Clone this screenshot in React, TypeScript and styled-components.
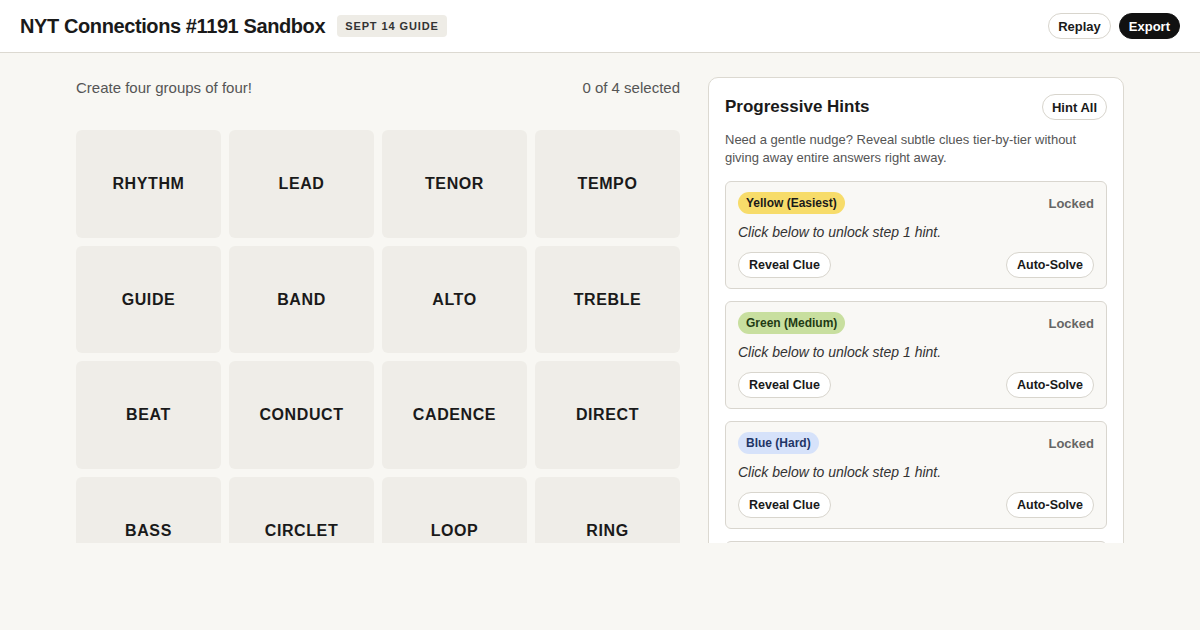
import styled, { createGlobalStyle } from "styled-components";

const GlobalStyle = createGlobalStyle`
  html, body {
    margin: 0;
    padding: 0;
    background: #f8f7f3;
    font-family: "Liberation Sans", Arial, sans-serif;
    color: #1a1a1a;
  }
  * { box-sizing: border-box; }
`;

const TopBar = styled.header`
  height: 53px;
  background: #fff;
  border-bottom: 1px solid #dcd9d1;
  display: flex;
  align-items: center;
  justify-content: space-between;
  padding: 0 20px;
`;

const TitleGroup = styled.div`
  display: flex;
  align-items: center;
  gap: 12px;
`;

const Title = styled.h1`
  margin: 0;
  font-size: 20px;
  font-weight: 700;
  letter-spacing: -0.4px;
`;

const DateBadge = styled.span`
  background: #eeece6;
  border-radius: 4px;
  padding: 5px 8px;
  font-size: 11px;
  font-weight: 700;
  letter-spacing: 0.9px;
  color: #333;
`;

const Actions = styled.div`
  display: flex;
  gap: 8px;
`;

const Pill = styled.button<{ $dark?: boolean }>`
  height: 26px;
  padding: 0 9px;
  border-radius: 13px;
  border: 1px solid ${(p) => (p.$dark ? "#111" : "#d8d5cd")};
  background: ${(p) => (p.$dark ? "#111" : "#fff")};
  color: ${(p) => (p.$dark ? "#fff" : "#1a1a1a")};
  font-family: inherit;
  font-size: 13px;
  font-weight: 700;
  cursor: pointer;
`;

const Main = styled.main`
  height: 490px;
  overflow: hidden;
  padding: 24px 76px 0;
  display: flex;
  gap: 28px;
  align-items: flex-start;
`;

const Board = styled.section`
  width: 604px;
  flex-shrink: 0;
`;

const BoardHead = styled.div`
  display: flex;
  justify-content: space-between;
  align-items: center;
  height: 21px;
  margin-bottom: 32px;
  font-size: 15px;
  color: #555;
`;

const Grid = styled.div`
  display: grid;
  grid-template-columns: repeat(4, 1fr);
  grid-auto-rows: 107.5px;
  gap: 8px;
`;

const Tile = styled.button`
  border: none;
  border-radius: 6px;
  background: #efede8;
  font-family: inherit;
  font-size: 16px;
  font-weight: 700;
  letter-spacing: 0.6px;
  color: #1a1a1a;
  padding-top: 2px;
  cursor: pointer;
`;

const Panel = styled.aside`
  width: 416px;
  flex-shrink: 0;
  background: #fff;
  border: 1px solid #dcd9d1;
  border-radius: 10px;
  padding: 16px;
`;

const PanelHead = styled.div`
  display: flex;
  justify-content: space-between;
  align-items: center;
`;

const PanelTitle = styled.h2`
  margin: 0;
  font-size: 17px;
  font-weight: 700;
`;

const PanelText = styled.p`
  margin: 11px 0 14px;
  font-size: 13px;
  line-height: 18px;
  color: #555;
`;

const Cards = styled.div`
  display: flex;
  flex-direction: column;
  gap: 12px;
`;

const Card = styled.div`
  background: #f9f8f5;
  border: 1px solid #d9d6cf;
  border-radius: 6px;
  padding: 10px 12px 10px;
`;

const CardTop = styled.div`
  display: flex;
  justify-content: space-between;
  align-items: center;
`;

const Level = styled.span<{ $bg: string; $fg: string }>`
  background: ${(p) => p.$bg};
  color: ${(p) => p.$fg};
  border-radius: 11px;
  padding: 4px 8px;
  font-size: 12px;
  font-weight: 700;
`;

const Status = styled.span`
  font-size: 13px;
  font-weight: 700;
  color: #666;
`;

const HintLine = styled.p`
  margin: 10px 0 12px;
  font-size: 14px;
  font-style: italic;
  color: #333;
`;

const CardActions = styled.div`
  display: flex;
  justify-content: space-between;
`;

const SmallPill = styled(Pill)`
  font-size: 12.5px;
  padding: 0 10px;
`;

const words = [
  "RHYTHM", "LEAD", "TENOR", "TEMPO",
  "GUIDE", "BAND", "ALTO", "TREBLE",
  "BEAT", "CONDUCT", "CADENCE", "DIRECT",
  "BASS", "CIRCLET", "LOOP", "RING",
];

const levels = [
  { label: "Yellow (Easiest)", bg: "#f7dc6a", fg: "#1a1a1a" },
  { label: "Green (Medium)", bg: "#c8df9f", fg: "#1f3a14" },
  { label: "Blue (Hard)", bg: "#d6e2fa", fg: "#1f3565" },
  { label: "Purple (Trickiest)", bg: "#e3d4f3", fg: "#3d2260" },
];

export default function App() {
  return (
    <>
      <GlobalStyle />
      <TopBar>
        <TitleGroup>
          <Title>NYT Connections #1191 Sandbox</Title>
          <DateBadge>SEPT 14 GUIDE</DateBadge>
        </TitleGroup>
        <Actions>
          <Pill>Replay</Pill>
          <Pill $dark>Export</Pill>
        </Actions>
      </TopBar>
      <Main>
        <Board>
          <BoardHead>
            <span>Create four groups of four!</span>
            <span>0 of 4 selected</span>
          </BoardHead>
          <Grid>
            {words.map((w) => (
              <Tile key={w}>{w}</Tile>
            ))}
          </Grid>
        </Board>
        <Panel>
          <PanelHead>
            <PanelTitle>Progressive Hints</PanelTitle>
            <Pill>Hint All</Pill>
          </PanelHead>
          <PanelText>
            Need a gentle nudge? Reveal subtle clues tier-by-tier without giving away entire answers right away.
          </PanelText>
          <Cards>
            {levels.map((l) => (
              <Card key={l.label}>
                <CardTop>
                  <Level $bg={l.bg} $fg={l.fg}>{l.label}</Level>
                  <Status>Locked</Status>
                </CardTop>
                <HintLine>Click below to unlock step 1 hint.</HintLine>
                <CardActions>
                  <SmallPill>Reveal Clue</SmallPill>
                  <SmallPill>Auto-Solve</SmallPill>
                </CardActions>
              </Card>
            ))}
          </Cards>
        </Panel>
      </Main>
    </>
  );
}
